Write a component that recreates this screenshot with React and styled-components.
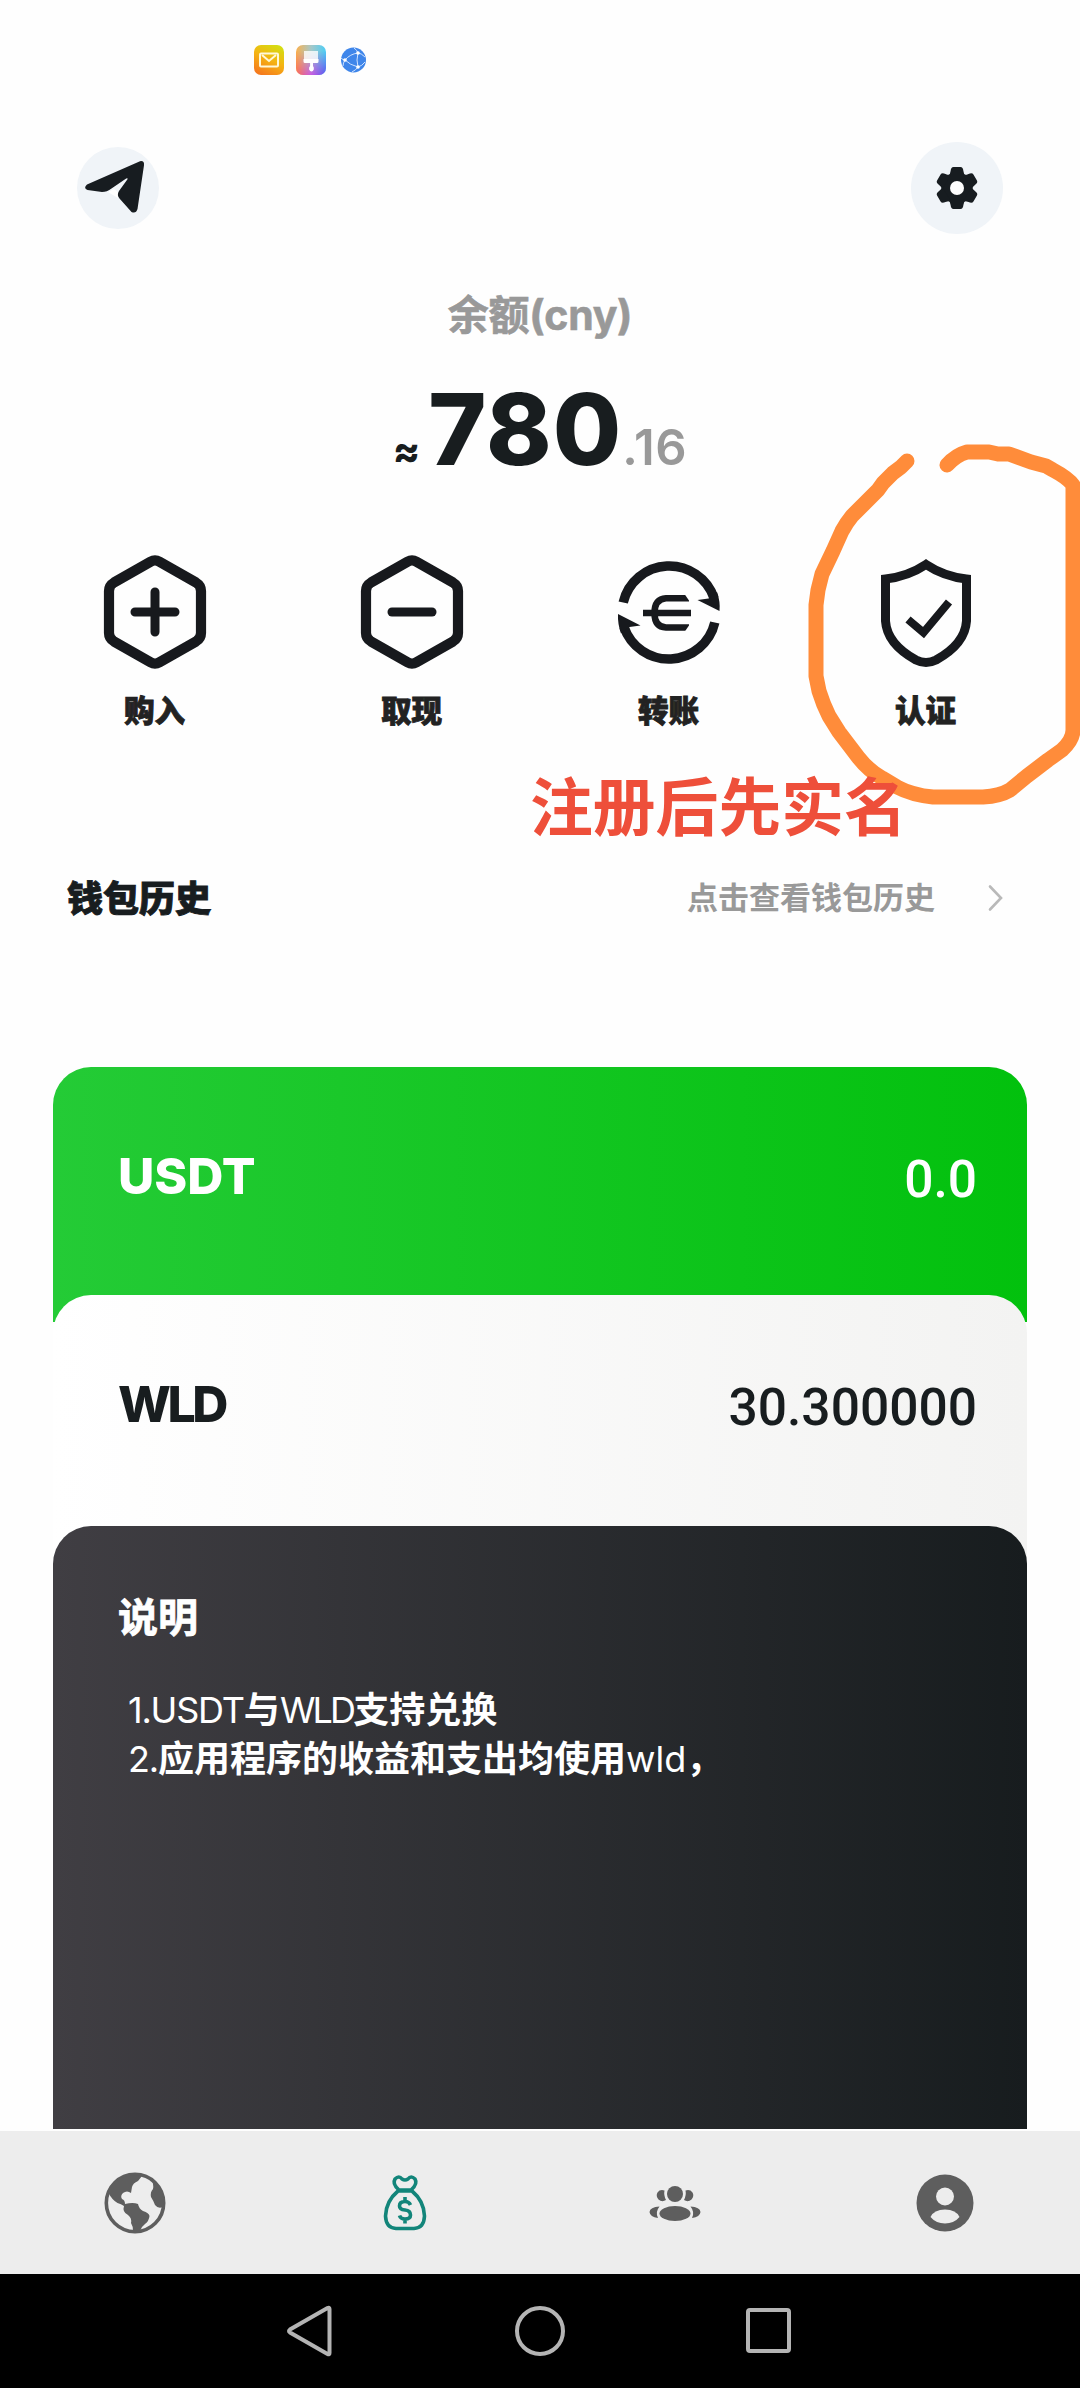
import React from 'react';
import styled, { createGlobalStyle } from 'styled-components';

const GlobalStyle = createGlobalStyle`
  * {
    box-sizing: border-box;
  }

  body {
    margin: 0;
    background-color: #fefefe;
    font-family: Inter, "Noto Sans CJK SC", sans-serif;
    color: #181d1f;
  }
`;

const Screen = styled.div`
  position: relative;
  display: flex;
  flex-direction: column;
  width: 1080px;
  height: 2388px;
  overflow: hidden;
  background-color: #fefefe;
`;

const StatusBar = styled.div`
  display: flex;
  align-items: center;
  gap: 12px;
  height: 120px;
  padding-left: 254px;
`;

const TopBar = styled.header`
  display: flex;
  align-items: center;
  justify-content: space-between;
  height: 136px;
  padding: 0 77px;
`;

const RoundButton = styled.button`
  display: flex;
  align-items: center;
  justify-content: center;
  width: ${({ $size }) => $size}px;
  height: ${({ $size }) => $size}px;
  padding: 0;
  border: 0;
  border-radius: 50%;
  background-color: #f0f4f8;
`;

const Balance = styled.section`
  display: flex;
  flex-direction: column;
  align-items: center;
  height: 284px;
  padding-top: 29px;
`;

const BalanceLabel = styled.div`
  height: 60px;
  font-size: 41px;
  font-weight: 700;
  line-height: 60px;
  letter-spacing: -0.3px;
  color: #999;
  -webkit-text-stroke: 0.6px #999;
`;

const Amount = styled.div`
  display: flex;
  align-items: baseline;
  height: 120px;
  margin-top: 24px;
  line-height: 120px;
`;

const Approx = styled.span`
  margin-right: 8px;
  font-size: 40px;
  font-weight: 800;
`;

const Whole = styled.span`
  font-size: 99px;
  font-weight: 800;
  letter-spacing: 1px;
`;

const Cents = styled.span`
  font-size: 49px;
  font-weight: 600;
  letter-spacing: 0.5px;
  color: #999;
`;

const Actions = styled.nav`
  display: grid;
  grid-template-columns: repeat(4, 257px);
  height: 240px;
  padding: 12px 0 0 26px;
`;

const Action = styled.a`
  display: flex;
  flex-direction: column;
  align-items: center;
`;

const ActionLabel = styled.span`
  margin-top: 16px;
  font-size: 30.6px;
  font-weight: 800;
  line-height: 46px;
  color: #222;
  -webkit-text-stroke: 0.8px #222;
`;

const History = styled.div`
  display: flex;
  align-items: center;
  height: 60px;
  margin-top: 88px;
  padding: 0 76px 0 67px;
`;

const HistoryTitle = styled.h2`
  flex: 1;
  margin: 2px 0 0;
  font-size: 36px;
  font-weight: 800;
  line-height: 60px;
  -webkit-text-stroke: 0.9px #181d1f;
`;

const HistoryHint = styled.span`
  margin-right: 52px;
  font-size: 31px;
  font-weight: 700;
  line-height: 60px;
  color: #999;
`;

const Cards = styled.main`
  display: flex;
  flex-direction: column;
  height: 1062px;
  margin: 139px 53px 0;
`;

const Card = styled.section`
  display: flex;
  align-items: flex-start;
  justify-content: space-between;
  height: ${({ $height }) => $height}px;
  margin-bottom: -${({ $overlap }) => $overlap}px;
  padding: 78px 50px 0 65px;
  border-radius: 38px 38px 0 0;
  background: linear-gradient(90deg, ${({ $from }) => $from}, ${({ $to }) => $to});
  color: ${({ $color }) => $color};
`;

const CoinName = styled.div`
  font-size: 50px;
  font-weight: 800;
  line-height: 62px;
  letter-spacing: ${({ $spacing }) => $spacing}px;
`;

const CoinAmount = styled.div`
  font-family: Roboto, sans-serif;
  font-size: 51.5px;
  font-weight: 500;
  line-height: 70px;
`;

const NoteCard = styled.section`
  flex: 1;
  padding: 62px 65px 0;
  border-radius: 38px 38px 0 0;
  background: linear-gradient(90deg, #403e43, #171c1e);
  color: #fff;
`;

const NoteTitle = styled.h3`
  margin: 0 0 38px;
  font-size: 40px;
  font-weight: 700;
  line-height: 60px;
  -webkit-text-stroke: 0.8px #fff;
`;

const NoteLine = styled.p`
  margin: 0 0 0 10px;
  font-size: 36px;
  font-weight: 700;
  line-height: 48.5px;
  white-space: nowrap;
`;

const Latin = styled.span`
  font-weight: 400;
  letter-spacing: ${({ $spacing }) => $spacing || 0}px;
`;

const TabBar = styled.footer`
  display: grid;
  grid-template-columns: repeat(4, 270px);
  place-items: center;
  height: 143px;
  margin-top: 2px;
  background-color: #ededed;
  color: #5e5e5e;
`;

const SystemBar = styled.div`
  display: flex;
  align-items: center;
  justify-content: center;
  gap: 177px;
  height: 114px;
  background-color: #000;
`;

/* marker strokes lie on top of the wallet page */
const Marker = styled.svg`
  position: absolute;
  top: 430px;
  left: 780px;
`;

const MarkerText = styled.div`
  position: absolute;
  top: 762px;
  left: 530px;
  font-size: 62.8px;
  font-weight: 700;
  line-height: 90px;
  color: #ee4f3a;
  white-space: nowrap;
`;

const MailIcon = () => (
  <svg width="30" height="30" viewBox="0 0 30 30">
    <defs>
      <linearGradient id="mail" x1="0.8" y1="0" x2="0.3" y2="1">
        <stop offset="0" stopColor="#d3df12" />
        <stop offset="0.5" stopColor="#f5b312" />
        <stop offset="1" stopColor="#f57a1d" />
      </linearGradient>
    </defs>
    <rect width="30" height="30" rx="7" fill="url(#mail)" />
    <rect x="6" y="8.5" width="18" height="13" rx="1" fill="none" stroke="#fff8d8" strokeWidth="2" />
    <path d="M8 10l7 6 7-6" fill="none" stroke="#fff8d8" strokeWidth="2" />
  </svg>
);

const ThemeIcon = () => (
  <svg width="30" height="30" viewBox="0 0 30 30">
    <defs>
      <linearGradient id="theme" x1="0" y1="0" x2="1" y2="0">
        <stop offset="0" stopColor="#fbb04c" />
        <stop offset="0.5" stopColor="#a6c8c8" />
        <stop offset="1" stopColor="#4ccdf5" />
      </linearGradient>
      <linearGradient id="themeLow" x1="0" y1="0" x2="1" y2="0">
        <stop offset="0" stopColor="#fb6a55" />
        <stop offset="0.5" stopColor="#c95ce0" />
        <stop offset="1" stopColor="#5a54f0" />
      </linearGradient>
      <linearGradient id="themeFade" x1="0" y1="0" x2="0" y2="1">
        <stop offset="0.2" stopColor="#000" />
        <stop offset="1" stopColor="#fff" />
      </linearGradient>
      <mask id="themeMask">
        <rect width="30" height="30" fill="url(#themeFade)" />
      </mask>
    </defs>
    <rect width="30" height="30" rx="7" fill="url(#theme)" />
    <rect width="30" height="30" rx="7" fill="url(#themeLow)" mask="url(#themeMask)" />
    <path d="M8 6h14v8H8z" fill="#fff" opacity="0.8" />
    <path d="M7.5 14h15v2.500q0 1.500-1.500 1.500h-4v3q1.200 1 .8 3.500-.8 2-2.300 2t-2.400-2q-.4-2.500 1-3.500v-3H9q-1.500 0-1.500-1.500z" fill="#fff" />
  </svg>
);

const BrowserIcon = () => (
  <svg width="30" height="30" viewBox="0 0 30 30">
    <circle cx="15.500" cy="15" r="12.500" fill="#3f86ea" />
    <g fill="none" stroke="#cfe2ff" strokeWidth="1">
      <path d="M7 15q5-6 13-7M7 15q5 5 13 7M20 8q-2 7 0 14M20 8q3 0 7 4M20 22q4-1 7-5M20 8q-1-3-4-5M7 15q-2 0-4-2M7 15q-2 3-2 6M20 22q-2 3-6 5" />
    </g>
    <circle cx="20" cy="8" r="1.800" fill="#fff" />
    <circle cx="7" cy="15" r="1.800" fill="#fff" />
    <circle cx="20" cy="22" r="1.800" fill="#fff" />
  </svg>
);

const TelegramIcon = () => (
  <svg width="82" height="82" viewBox="0 0 82 82">
    <path d="M31 45l10 6v-6l-4-3z" fill="#fff" />
    <path
      d="M10 37.500L63 14.200q4.500-.7 4 4L60.500 62q-1.500 5-6 3L42.500 51.500q-3-3.500-.5-7.500l8.500-11.700q.5-1.600-1.300-.8L34.500 41.500Q30 45 25 45L10.500 43q-4.500-2-.5-5.500z"
      fill="#171c20"
    />
  </svg>
);

const GearIcon = () => (
  <svg width="44" height="44" viewBox="-22 -22 44 44">
    <g fill="#171c20">
      <circle r="15.500" />
      {[0, 60, 120, 180, 240, 300].map((angle) => (
        <path
          key={ angle }
          d="M-8.500-12Q-6.700-14-6.400-17Q-6-21-3.500-21H3.500Q6-21 6.400-17Q6.700-14 8.500-12z"
          transform={ `rotate(${angle})` }
        />
      ))}
    </g>
    <circle r="7" fill="#fdfdfd" />
  </svg>
);

const Hexagon = ({ children }) => (
  <svg width="120" height="120" viewBox="-60 -60 120 120" fill="none" stroke="#17191d">
    <path
      d="M-4.500-50.300Q0-52.800 4.500-50.300L41-29.500Q46-26.500 46-21V21Q46 26.500 41 29.500L4.500 50.300Q0 52.800-4.500 50.300L-41 29.500Q-46 26.500-46 21V-21Q-46-26.500-41-29.500z"
      strokeWidth="10.200"
    />
    <g strokeWidth="9" strokeLinecap="round">{children}</g>
  </svg>
);

const BuyIcon = () => (
  <Hexagon>
    <path d="M-20 0H20M0-20V20" />
  </Hexagon>
);

const WithdrawIcon = () => (
  <Hexagon>
    <path d="M-20 0H20" />
  </Hexagon>
);

const TransferIcon = () => (
  <svg width="120" height="120" viewBox="-60 -60 120 120" fill="none" stroke="#17191d">
    <path d="M-45.800-9.500A47.300 47.300 0 0 1 45-14" strokeWidth="9.500" />
    <path d="M45.800 10.500A47.300 47.300 0 0 1-45 15" strokeWidth="9.500" />
    <g fill="#17191d" stroke="none">
      <path d="M28.500-12L39.500-13.500 48-20Q51.500-10 50.500-1z" />
      <path d="M-28.500 13.500L-39.500 15-48 21.500Q-51.500 11.500-51 2z" />
    </g>
    <path d="M20-13.800H-3Q-14.500-13-14.500 1T-3 15.500H20" strokeWidth="6.500" />
    <path d="M-26 1H22" strokeWidth="6.500" />
    <path d="M15.500-18l5.500 8h3v-8zM15.500 20l5.500-8h3v8z" fill="#fefefe" stroke="none" />
  </svg>
);

const VerifyIcon = () => (
  <svg width="120" height="120" viewBox="-60 -60 120 120" fill="none" stroke="#17191d" strokeWidth="9">
    <path d="M0-47.500Q18-35.500 40.500-33V9Q39 32 10 48Q0 53-10 48Q-39 32-40.500 9V-33Q-18-35.500 0-47.500z" />
    <path d="M-18 7.500L-2.500 20.500L23-10" strokeWidth="8" />
  </svg>
);

const ChevronIcon = () => (
  <svg width="17" height="28" viewBox="0 0 17 28">
    <path d="M3 2.500L14 14 3 25.500" fill="none" stroke="#b9b9b9" strokeWidth="2.600" strokeLinecap="round" />
  </svg>
);

const EarthIcon = () => (
  <svg width="62" height="62" viewBox="0 0 62 62">
    <circle cx="31" cy="31" r="28.700" fill="none" stroke="currentColor" strokeWidth="3.600" />
    <path
      d="M38 4L34 9Q29 11 28 15L27 21Q23 18 19 21Q16 24 18 27Q21 28 21 32Q29 30 34 32Q35 37 39 39Q45 41 45.500 44Q45 49 41 52Q38 54 36 59H29Q29 54 27 51Q28 46 24 43Q18 40 20 34Q17 32 13.500 31Q8 28 4 20Q14 0 38 4z"
      fill="currentColor"
    />
    <path d="M47 7Q50 12 49 17Q46 20 47 25Q49 28 51 33Q54 37 59 35Q62 18 47 7z" fill="currentColor" />
  </svg>
);

const MoneyBagIcon = () => (
  <svg width="46" height="58" viewBox="0 0 46 58" fill="none" stroke="#12857a" strokeWidth="3.600" strokeLinejoin="round">
    <path d="M17 16Q10 10 13 5Q17 1 20 5Q23 7 26 5Q29 1 33 5Q36 10 29 16z" />
    <path d="M16 17H30Q42 27 42.500 42Q42 54 32 54.500H14Q4 54 3.500 42Q4 27 16 17z" />
    <path d="M28.500 31Q27 27.500 23 27.500Q17.500 27.500 17.500 32Q17.500 35.500 23 36T28.500 41Q28.500 45 23 45Q18.500 45 17.500 41.500M23 23V28M23 45V49.500" />
  </svg>
);

const PeopleIcon = () => (
  <svg width="52" height="40" viewBox="0 0 52 40" fill="currentColor">
    <ellipse cx="26" cy="11" rx="8" ry="8" />
    <path d="M15.500 7.500Q14.500 12 17 17Q13 19.500 9.500 16.500Q6.500 13 8.500 9.500Q11 6 15.500 7.500zM36.500 7.500Q37.500 12 35 17Q39 19.500 42.500 16.500Q45.500 13 43.500 9.500Q41 6 36.500 7.500z" />
    <ellipse cx="26" cy="30.500" rx="15.500" ry="7.500" />
    <path d="M10.500 23.500Q6 29 9 35Q1 34 .5 29Q1 24 10.500 23.500zM41.500 23.500Q46 29 43 35Q51 34 51.500 29Q51 24 41.500 23.500z" />
  </svg>
);

const AccountIcon = () => (
  <svg width="58" height="58" viewBox="0 0 58 58">
    <circle cx="29" cy="29" r="28.500" fill="currentColor" />
    <circle cx="29" cy="22.500" r="9" fill="#ededed" />
    <path d="M14.500 43Q18 35.500 29 35.500T43.500 43Q38 49.500 29 49.500T14.500 43z" fill="#ededed" />
  </svg>
);

const actions = [
  { label: '购入', Icon: BuyIcon },
  { label: '取现', Icon: WithdrawIcon },
  { label: '转账', Icon: TransferIcon },
  { label: '认证', Icon: VerifyIcon },
];

const coins = [
  { name: 'USDT', spacing: 0, amount: '0.0', height: 255, overlap: 27, from: '#24cb36', to: '#02c10d', color: '#fff' },
  { name: 'WLD', spacing: -3.5, amount: '30.300000', height: 270, overlap: 39, from: '#ffffff', to: '#f3f3f2', color: '#181d1f' },
];

function App() {
  return (
    <Screen>
      <GlobalStyle />
      <StatusBar>
        <MailIcon />
        <ThemeIcon />
        <BrowserIcon />
      </StatusBar>

      <TopBar>
        <RoundButton $size={ 82 }><TelegramIcon /></RoundButton>
        <RoundButton $size={ 92 }><GearIcon /></RoundButton>
      </TopBar>

      <Balance>
        <BalanceLabel>余额(cny)</BalanceLabel>
        <Amount>
          <Approx>≈</Approx>
          <Whole>780</Whole>
          <Cents>.16</Cents>
        </Amount>
      </Balance>

      <Actions>
        {actions.map(({ label, Icon }) => (
          <Action key={ label }>
            <Icon />
            <ActionLabel>{label}</ActionLabel>
          </Action>
        ))}
      </Actions>

      <History>
        <HistoryTitle>钱包历史</HistoryTitle>
        <HistoryHint>点击查看钱包历史</HistoryHint>
        <ChevronIcon />
      </History>

      <Cards>
        {coins.map(({ name, spacing, amount, height, overlap, from, to, color }) => (
          <Card key={ name } $height={ height } $overlap={ overlap } $from={ from } $to={ to } $color={ color }>
            <CoinName $spacing={ spacing }>{name}</CoinName>
            <CoinAmount>{amount}</CoinAmount>
          </Card>
        ))}
        <NoteCard>
          <NoteTitle>说明</NoteTitle>
          <NoteLine>
            <Latin $spacing={ -1.2 }>1.USDT</Latin>
            与
            <Latin $spacing={ -2.8 }>WLD</Latin>
            支持兑换
          </NoteLine>
          <NoteLine>
            <Latin $spacing={ -1.2 }>2.</Latin>
            应用程序的收益和支出均使用
            <Latin>wld</Latin>
            ，
          </NoteLine>
        </NoteCard>
      </Cards>

      <TabBar>
        <EarthIcon />
        <MoneyBagIcon />
        <PeopleIcon />
        <AccountIcon />
      </TabBar>

      <SystemBar>
        <svg width="52" height="52" viewBox="0 0 52 52">
          <path d="M44.500 4V48Q44.500 50 42.500 49L5 27.500Q3 26 5 24.500L42.500 3Q44.500 2 44.500 4z" fill="none" stroke="#b4b4b4" strokeWidth="4" />
        </svg>
        <svg width="52" height="52" viewBox="0 0 52 52">
          <circle cx="26" cy="26" r="23" fill="none" stroke="#b4b4b4" strokeWidth="4" />
        </svg>
        <svg width="52" height="52" viewBox="0 0 52 52">
          <rect x="5" y="5" width="41" height="41" rx="2" fill="none" stroke="#b4b4b4" strokeWidth="4" />
        </svg>
      </SystemBar>

      <Marker width="300" height="390" viewBox="780 430 300 390">
        <path
          d="M907 461L901 467 893 473 883 483 878 490 852 516Q847 522 842 531L833 551 822 574 818 590 816 605V676L819 691Q823 704 829 716L839 732 858 757Q869 771 882 778L897 787Q912 795 933 797H983Q1000 796 1010 790L1027 776 1048 760 1062 750Q1073 740 1073 730V485Q1068 478 1053 470L1046 466 1031 462 1009 454H998L989 452H967Q956 455 947 465"
          fill="none"
          stroke="#ff8c3a"
          strokeWidth="15"
          strokeLinecap="round"
          strokeLinejoin="round"
        />
      </Marker>
      <MarkerText>注册后先实名</MarkerText>
    </Screen>
  );
}

export default App;
